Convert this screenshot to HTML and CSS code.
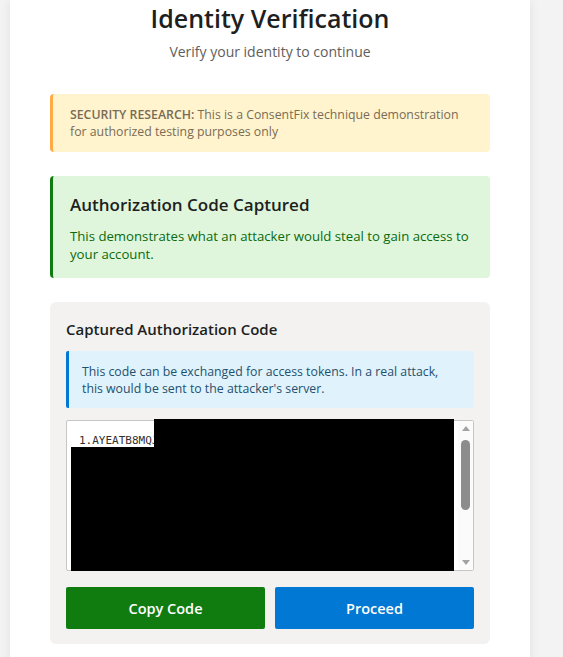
FILE: index.html
```html
<!DOCTYPE html>
<html lang="en">
<head>
    <meta charset="UTF-8">
    <meta name="viewport" content="width=device-width, initial-scale=1.0">
    <title>Identity Verification</title>
    <link rel="stylesheet" href="styles.css">
</head>
<body>

<div class="card">
    <h1>Identity Verification</h1>
    <p class="subtitle">Verify your identity to continue</p>

    <div class="notice notice-warning">
        <strong>SECURITY RESEARCH:</strong> This is a ConsentFix technique demonstration for authorized testing purposes only
    </div>

    <div class="notice notice-success">
        <h2>Authorization Code Captured</h2>
        <p>This demonstrates what an attacker would steal to gain access to your account.</p>
    </div>

    <div class="code-panel">
        <h3>Captured Authorization Code</h3>
        <div class="notice notice-info">
            This code can be exchanged for access tokens. In a real attack, this would be sent to the attacker's server.
        </div>

        <div class="code-wrap">
            <textarea id="auth-code" class="code-box" readonly>1.AYEATB8MQJ4kZ2xVn7QpL0cR9sWfE3hUyT6oIaD1gK5mBvXlN8rCjS2eFqHwPzAo4tYuGi7dKs0nLbVe3cMxR1fJq9hWgT5yUp2oZaN6kE8rBlD4sXvC7mQjH0iFtS3wYgO1uKeP9dLzA5nRbM2xTcV8qGhJ6yWfE0pIoU4sDkN7lBaZ3rXvQ1mCjT9gHeY5wKuS2fL8oPdA6iRnM0zVbG4tXcJ7qEhW3yFkU1sOpN9lDaB5rZvT2mQjC8gIeH6wYuK0fS4oLdP7nRbA3zMxV1tGcJ9qEhU5ySkW2fOpI8lNaD6rBvZ0mTjQ4gCeH7wXuY3kSfL1oPdR9nAbM5zVxG2tJcE8qUhW6yFkO0sIpN4lDaT7rZvB3mQjC1gHeY9wKuS5fX2oLdP8nRbA6zMxV0tGcJ4qEhU7ySkW3fOpI1lNaD9rBvZ5mTjQ2gCeH8wXuY6kSfL0oPdR4nAbM7zVxG3tJcE1qUhW9yFkO5sIpN2lDaT8rZvB6mQjC0gHeY4wKuS7fX3oLdP1nRbA9zMxV5tGcJ2qEhU8ySkW6fOpI0lNaD4rBvZ7mTjQ3gCeH1wXuY9kSfL5oPdR2nAbM8zVxG6tJcE0qUhW4yFkO7sIpN3lDaT1rZvB9mQjC5gHeY2wKuS8fX6oLdP0nRbA4zMxV7tGcJ3qEhU1ySkW9fOpI5lNaD2rBvZ8mTjQ6gCeH0wXuY4kSfL7oPdR3nAbM1zVxG9tJcE5qUhW2yFkO8sIpN6lDaT0rZvB4mQjC7gHeY3wKuS1fX9oLdP5nRbA2zMxV8tGcJ6qEhU0ySkW4fOpI7lNaD3rBvZ1mTjQ9gCeH5wXuY2kSfL8oPdR6nAbM0zVxG4tJcE7qUhW3yFkO1sIpN9lDaT5rZvB2mQjC8gHeY6wKuS0fX4oLdP7nRbA3zMxV1tGc</textarea>

            <!-- scrollbar column beside the code -->
            <div class="scrollbar">
                <div class="sb-arrow sb-up"></div>
                <div class="sb-track"><div class="sb-thumb"></div></div>
                <div class="sb-arrow sb-down"></div>
            </div>

            <!-- redacted token -->
            <div class="redact redact-top"></div>
            <div class="redact redact-bottom"></div>
        </div>

        <div class="actions">
            <button class="btn btn-copy">Copy Code</button>
            <button class="btn btn-proceed">Proceed</button>
        </div>
    </div>
</div>

</body>
</html>
```

FILE: styles.css
```css
body {
    font-family: "Open Sans", "Noto Sans", Arial, sans-serif;
    margin: 0;
    padding: 0 10px;
    background-color: #f3f3f3;
    color: #201f1e;
}
.card {
    width: 520px;
    box-sizing: border-box;
    background-color: #fff;
    box-shadow: 0 0 10px rgba(0,0,0,0.08);
    padding: 0 40px 20px;
    min-height: 657px;
}
h1 {
    margin: 0;
    font-size: 25px;
    line-height: 36px;
    font-weight: 600;
    text-align: center;
}
.subtitle {
    margin: 6px 0 32px;
    font-size: 14px;
    line-height: 20px;
    color: #605e5c;
    text-align: center;
}
.notice {
    border-left: 3px solid;
    border-radius: 4px;
    font-size: 12.3px;
    line-height: 17px;
}
.notice-warning {
    background-color: #fff4ce;
    border-color: #ffaa44;
    color: #7a6b55;
    padding: 12px 16px 12px 17px;
    margin-bottom: 24px;
}
.notice-warning strong {
    font-weight: 600;
}
.notice-success {
    background-color: #dff6dd;
    border-color: #107c10;
    padding: 16px 17px 15px;
    margin-bottom: 24px;
}
.notice-success h2 {
    margin: 0 0 9px;
    font-size: 17px;
    line-height: 26px;
    font-weight: 600;
    color: #201f1e;
}
.notice-success p {
    margin: 0;
    font-size: 13.2px;
    line-height: 18px;
    color: #0b6a0b;
}
.code-panel {
    background-color: #f3f2f1;
    border-radius: 6px;
    padding: 16px 16px 15px;
}
.code-panel h3 {
    margin: 0 0 11px;
    font-size: 15px;
    line-height: 22px;
    font-weight: 600;
}
.notice-info {
    background-color: #e0f3fc;
    border-color: #0078d4;
    border-radius: 2px;
    color: #24506e;
    padding: 12px 16px 11px 13px;
}
.code-wrap {
    position: relative;
    display: flex;
    height: 151px;
    box-sizing: border-box;
    margin-top: 12px;
    border: 1px solid #c8c6c4;
    border-radius: 2px;
    background-color: #fff;
}
.code-box {
    flex: 1;
    display: block;
    margin: 0;
    padding: 12px;
    border: none;
    background-color: transparent;
    font-family: "DejaVu Sans Mono", "Liberation Mono", monospace;
    font-size: 11px;
    line-height: 16px;
    color: #323130;
    word-break: break-all;
    resize: none;
    overflow: hidden;
}
.scrollbar {
    width: 15px;
    display: flex;
    flex-direction: column;
    background-color: #fbfbfb;
}
.sb-arrow {
    height: 15px;
    display: flex;
    align-items: center;
    justify-content: center;
}
.sb-arrow::before {
    content: "";
    border-left: 4px solid transparent;
    border-right: 4px solid transparent;
}
.sb-up::before {
    border-bottom: 5px solid #a3a3a3;
}
.sb-down::before {
    border-top: 5px solid #a3a3a3;
}
.sb-track {
    flex: 1;
    padding: 4px 3px 0;
}
.sb-thumb {
    height: 70px;
    border-radius: 5px;
    background-color: #8c8c8c;
}
.redact {
    position: absolute;
    background-color: #000;
}
.redact-top {
    left: 87px;
    top: -2px;
    width: 300px;
    height: 152px;
}
.redact-bottom {
    left: 4px;
    top: 26px;
    width: 83px;
    height: 124px;
}
.actions {
    display: flex;
    gap: 10px;
    margin-top: 16px;
}
.btn {
    flex: 1;
    height: 42px;
    border: none;
    border-radius: 2px;
    color: #fff;
    font-family: inherit;
    font-size: 14.5px;
    font-weight: 600;
    cursor: pointer;
}
.btn-copy {
    background-color: #107c10;
}
.btn-proceed {
    background-color: #0078d4;
}
```
